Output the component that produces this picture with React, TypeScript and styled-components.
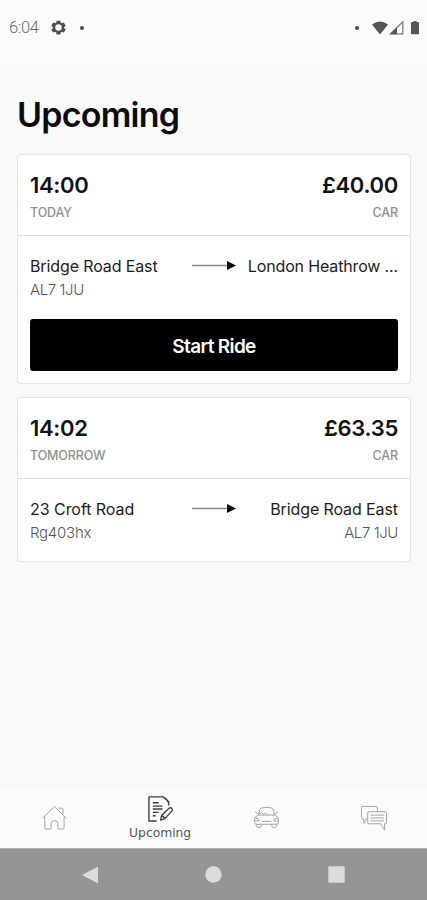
import React from 'react';
import styled, { createGlobalStyle } from 'styled-components';

const GlobalStyle = createGlobalStyle`
  * { box-sizing: border-box; }
  body { margin: 0; background: #f9f9f9; font-family: Inter, sans-serif; }
`;

const Screen = styled.div`
  display: flex;
  flex-direction: column;
  width: 427px;
  height: 900px;
  overflow: hidden;
  background: #f9f9f9;
`;

const StatusBar = styled.header`
  display: flex;
  align-items: center;
  justify-content: space-between;
  height: 64px;
  padding: 0 6px 9px 9px;
  background: #fbfbfb;
  color: #555;
`;

const StatusGroup = styled.div`
  display: flex;
  align-items: center;
`;

const Clock = styled.span`
  width: 42px;
  padding-top: 1px;
  font: 300 16.5px/20px Roboto, sans-serif;
  letter-spacing: -0.3px;
  color: #666;
`;

const Dot = styled.i<{ $before?: number; $after?: number }>`
  width: 4px;
  height: 4px;
  margin-left: ${(p) => p.$before ?? 0}px;
  margin-right: ${(p) => p.$after ?? 0}px;
  border-radius: 50%;
  background: #4a4a4a;
`;

const Main = styled.main`
  flex: 1;
  padding: 31px 16px 0 17px;
`;

const Title = styled.h1`
  margin: 0 0 19px;
  font-size: 34px;
  line-height: 40px;
  font-weight: 600;
  letter-spacing: -0.75px;
  color: #0c0c0c;
`;

const Card = styled.article`
  margin-bottom: 13px;
  border: 1px solid #e5e5e5;
  border-radius: 4px;
  background: #fff;
  box-shadow: 0 0 1px #e8e8e8;
`;

const CardHeader = styled.div`
  display: flex;
  justify-content: space-between;
  height: 81px;
  padding: 16px 12px 0;
  border-bottom: 1px solid #dedede;
`;

const Column = styled.div<{ $end?: boolean }>`
  display: flex;
  flex-direction: column;
  align-items: ${(p) => (p.$end ? 'flex-end' : 'flex-start')};
  white-space: nowrap;
`;

const Figure = styled.span`
  font-size: 22px;
  line-height: 28px;
  font-weight: 600;
  letter-spacing: -0.3px;
  color: #111;
`;

const Label = styled.span`
  margin-top: 5px;
  font-size: 12.5px;
  line-height: 18px;
  font-weight: 500;
  letter-spacing: -0.15px;
  color: #909090;
`;

const CardBody = styled.div<{ $compact?: boolean }>`
  padding: 18px 12px ${(p) => (p.$compact ? 16 : 12)}px;
`;

const Route = styled.div`
  display: grid;
  grid-template-columns: 162px 44px 1fr;
`;

const Place = styled.span<{ $spacing: number }>`
  font-size: 16px;
  line-height: 24px;
  letter-spacing: ${(p) => p.$spacing}px;
  color: #1c1c1c;
`;

const Postcode = styled.span<{ $spacing: number }>`
  font-size: 15px;
  line-height: 24px;
  font-weight: 300;
  letter-spacing: ${(p) => p.$spacing}px;
  color: #555;
`;

const ArrowIcon = styled.svg`
  width: 44px;
  height: 10px;
  margin-top: 7px;
`;

const StartButton = styled.button`
  display: block;
  width: 100%;
  height: 52px;
  margin-top: 17px;
  padding: 3px 0 0;
  border: 0;
  border-radius: 3px;
  background: #000;
  color: #fff;
  font: 600 19px/24px Inter, sans-serif;
  letter-spacing: -0.65px;
`;

const TabBar = styled.nav`
  display: grid;
  grid-template-columns: repeat(4, 1fr);
  height: 62px;
  border-top: 1px solid #f6f6f6;
  background: #fbfbfb;
`;

const Tab = styled.a<{ $active?: boolean }>`
  display: flex;
  flex-direction: column;
  align-items: center;
  padding-top: ${(p) => (p.$active ? 8 : 17)}px;
  color: ${(p) => (p.$active ? '#3c3c3c' : '#a0a0a0')};
`;

const TabLabel = styled.span`
  margin-top: 3px;
  font: 400 12.3px/16px "DejaVu Sans", sans-serif;
  letter-spacing: 0;
  color: #555;
`;

const SystemBar = styled.footer`
  display: flex;
  align-items: center;
  justify-content: space-between;
  height: 52px;
  padding: 0 82px 0 82px;
  border-top: 1px solid #b0b0b0;
  background: #959595;
`;

const LineIcon = ({ children, size = 27 }: { children: React.ReactNode; size?: number }) => (
  <svg width={size} height={size} viewBox="0 0 28 28" fill="none" stroke="currentColor" strokeWidth="1" strokeLinejoin="round">
    {children}
  </svg>
);

const HomeIcon = () => (
  <LineIcon>
    <path d="M2.500 15 15 2.500 27.500 15M5 13v11.700q0 1.300 1.300 1.300H10.500q1 0 1-1v-5q0-2.500 2.500-2.500h2q2.500 0 2.500 2.500v5q0 1 1 1h4.200q1.300 0 1.300-1.300V13M19.500 4.300h3.300q1 0 1 1v5" />
  </LineIcon>
);

const NoteIcon = () => (
  <LineIcon>
    <path strokeWidth="1.4" d="M10 27H2V2h15l5.500 5v4M17 2.500q4 1 4.500 5" />
    <path strokeWidth="1.4" d="M6 8h6M6 11.500h10M6 14.500h10M6 18h6M6 21.500h3" />
    <path strokeWidth="1.4" d="m14 26 1.300-5 7.600-7.400q1.500-1 2.800.3 1.200 1.400 0 2.800L18.500 24.500ZM15.500 21l3 3.300" />
  </LineIcon>
);

const CarIcon = () => (
  <LineIcon>
    <path d="M6 11 7 6q.5-2 2.500-2 4.500-1 9 0 2 0 2.500 2l1 5M5 11.500h18q3.500 2 3.500 5V19q0 2-2 2h-21q-2 0-2-2v-2.500q0-3 3.500-5M5.500 10.500 2 8M22.500 10.500 26 8M6 11l3-2 2 2 2-2 2 2M2.500 14.500q4 0 4 3H2M25.500 14.500q-4 0-4 3h4.500M9 18h10M3.500 21v1.500q0 2 2.500 2t2.500-2V21M19.500 21v1.500q0 2 2.500 2t2.500-2V21" />
  </LineIcon>
);

const ChatIcon = () => (
  <LineIcon>
    <path d="M8 15.500H6.500L4 20v-4.500H3q-1.500 0-1.500-1.500V4q0-1.500 1.500-1.500h13.500q1.500 0 1.500 1.500v4M9.500 8h16.500q1.500 0 1.500 1.500v9.500q0 1.500-1.500 1.500H25.500v6.500l-4-6.500H9.500Q8 20.500 8 19v-9.500Q8 8 9.500 8ZM11 11.500h14M11 14.500h14M11 17.500h14" />
  </LineIcon>
);

const RouteArrow = () => (
  <ArrowIcon viewBox="0 0 44 10">
    <path d="M0 4.500h36" stroke="#888" strokeWidth="1.500" />
    <path d="M35 0 44 4.500 35 9Z" fill="#0a0a0a" />
  </ArrowIcon>
);

interface Stop { place: string; code?: string; placeSpacing: number; codeSpacing?: number }
interface Ride {
  time: string; day: string; price: string;
  from: Stop; to: Stop; startable?: boolean;
}

const rides: Ride[] = [
  {
    time: '14:00', day: 'TODAY', price: '£40.00',
    from: { place: 'Bridge Road East', code: 'AL7 1JU', placeSpacing: -0.12, codeSpacing: -0.4 },
    to: { place: 'London Heathrow ...', placeSpacing: -0.15 },
    startable: true,
  },
  {
    time: '14:02', day: 'TOMORROW', price: '£63.35',
    from: { place: '23 Croft Road', code: 'Rg403hx', placeSpacing: -0.05, codeSpacing: -0.25 },
    to: { place: 'Bridge Road East', code: 'AL7 1JU', placeSpacing: -0.1, codeSpacing: -0.4 },
  },
];

const StopInfo = ({ stop, end }: { stop: Stop; end?: boolean }) => (
  <Column $end={end}>
    <Place $spacing={stop.placeSpacing}>{stop.place}</Place>
    {stop.code && <Postcode $spacing={stop.codeSpacing ?? 0}>{stop.code}</Postcode>}
  </Column>
);

const RideCard = ({ ride }: { ride: Ride }) => (
  <Card>
    <CardHeader>
      <Column>
        <Figure>{ride.time}</Figure>
        <Label>{ride.day}</Label>
      </Column>
      <Column $end>
        <Figure>{ride.price}</Figure>
        <Label>CAR</Label>
      </Column>
    </CardHeader>
    <CardBody $compact={!ride.startable}>
      <Route>
        <StopInfo stop={ride.from} />
        <RouteArrow />
        <StopInfo stop={ride.to} end />
      </Route>
      {ride.startable && <StartButton>Start Ride</StartButton>}
    </CardBody>
  </Card>
);

export default function App() {
  return (
    <>
      <GlobalStyle />
      <Screen>
        <StatusBar>
          <StatusGroup>
            <Clock>6:04</Clock>
            <svg width="15" height="15" viewBox="0 0 24 24" fill="#4d4d4d" fillRule="evenodd">
              <path d="m9 1-.5 3-2 1.100-3-1.100-3 5 2.500 2v2L.5 15l3 5 3-1.100 2 1.100.5 3h6l.5-3 2-1.100 3 1.100 3-5-2.500-2v-2l2.500-2-3-5-3 1.100-2-1.100L15 1Zm3 5.800a5.200 5.200 0 1 1 0 10.400 5.200 5.200 0 0 1 0-10.400Z" />
            </svg>
            <Dot $before={14} />
          </StatusGroup>
          <StatusGroup>
            <Dot $after={13} />
            <svg width="49" height="16" viewBox="0 0 49 16" fill="#555">
              <path d="M0 4.500Q8-1.500 16 4.500L8 14.500Z" />
              <path d="M18.500 13.800 30.800 1.800v12Z" fill="none" stroke="#777" strokeWidth="1.200" />
              <path d="M18 14.300 25 7.500v6.800Z" />
              <path d="M39 3q0-1 1-1h1.500V1h3v1H46q1 0 1 1v10.300q0 1-1 1h-6q-1 0-1-1Z" />
            </svg>
          </StatusGroup>
        </StatusBar>
        <Main>
          <Title>Upcoming</Title>
          {rides.map((ride) => <RideCard key={ride.time} ride={ride} />)}
        </Main>
        <TabBar>
          <Tab><HomeIcon /></Tab>
          <Tab $active><NoteIcon /><TabLabel>Upcoming</TabLabel></Tab>
          <Tab><CarIcon /></Tab>
          <Tab><ChatIcon /></Tab>
        </TabBar>
        <SystemBar>
          <svg width="17" height="18" viewBox="0 0 17 18"><path d="M0 9 16 .5v17Z" fill="#dcdcdc" /></svg>
          <svg width="17" height="17" viewBox="0 0 17 17"><circle cx="8.500" cy="8.500" r="8.200" fill="#dcdcdc" /></svg>
          <svg width="17" height="17" viewBox="0 0 17 17"><rect x=".3" y=".3" width="16.400" height="16.400" rx="1" fill="#dcdcdc" /></svg>
        </SystemBar>
      </Screen>
    </>
  );
}
